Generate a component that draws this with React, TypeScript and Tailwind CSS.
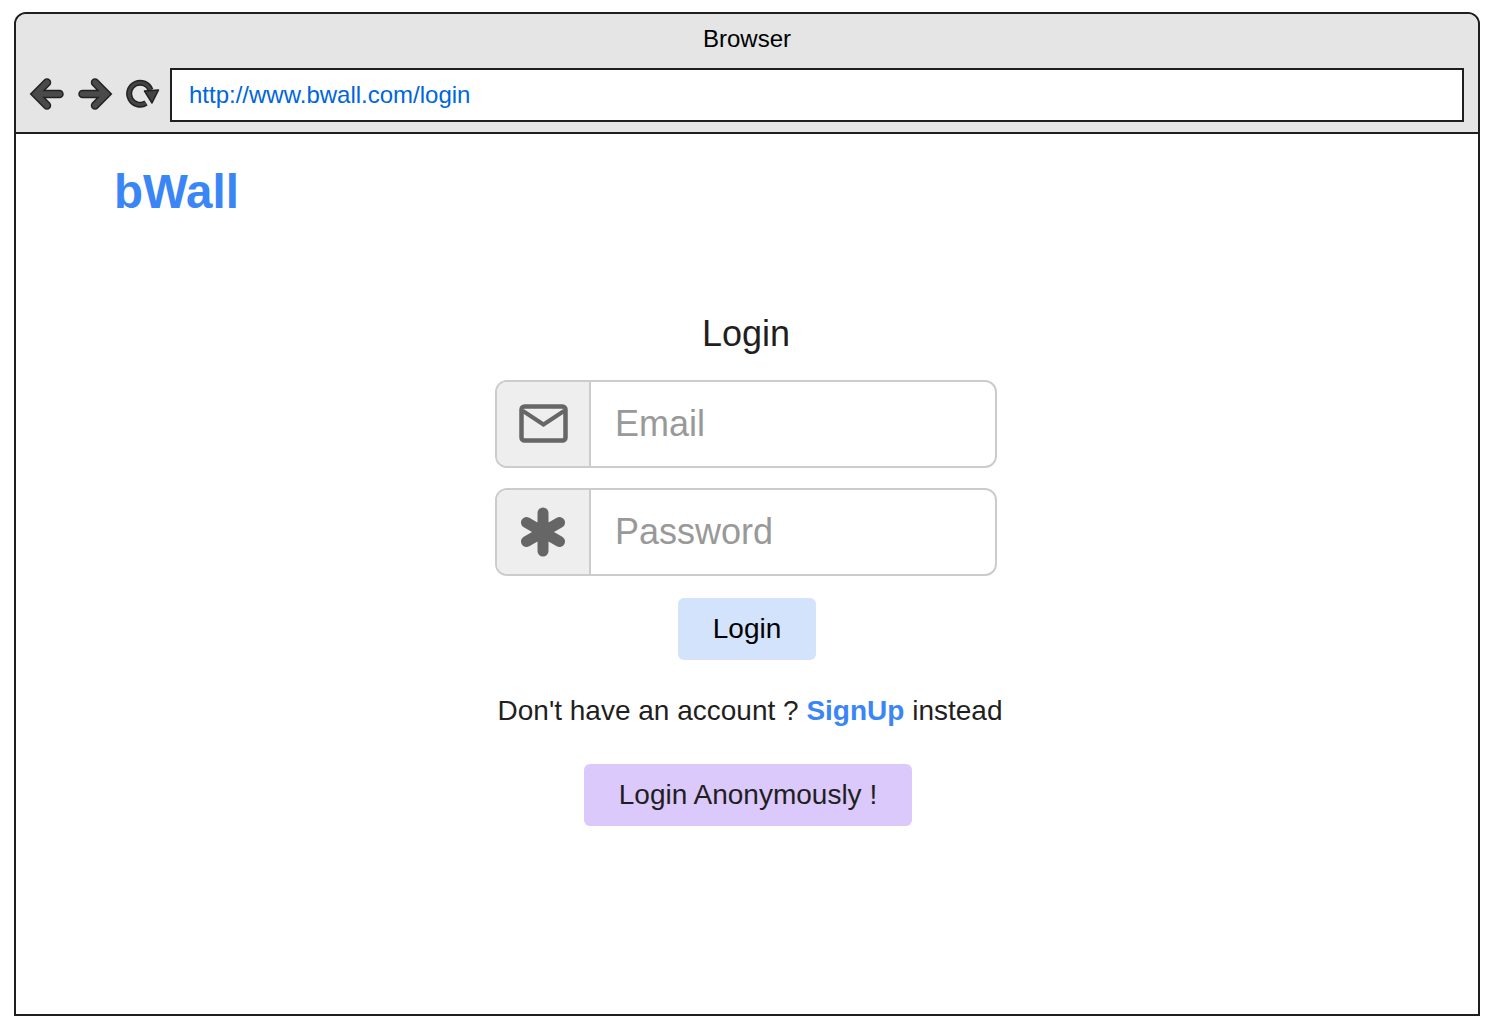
import React from "react";

function Arrow({ flip }: { flip?: boolean }) {
  const d = "M7.6 18 H31.5 M19 6.5 L7.6 18 L19 29.5";
  return (
    <svg width="38" height="38" viewBox="0 0 38 38" fill="none" className={flip ? "shrink-0 -scale-x-100" : "shrink-0"}>
      <path d={d} stroke="#222222" strokeWidth="8.5" strokeLinecap="round" strokeLinejoin="miter" />
      <path d={d} stroke="#4a4a4a" strokeWidth="5.5" strokeLinecap="round" strokeLinejoin="miter" />
    </svg>
  );
}

function Refresh() {
  const d = "M22 27 A11 11 0 1 1 26.5 14";
  return (
    <svg width="38" height="38" viewBox="0 0 38 38" fill="none" className="shrink-0">
      <path d={d} stroke="#222222" strokeWidth="6" strokeLinecap="butt" />
      <path d={d} stroke="#444444" strokeWidth="3" strokeLinecap="butt" />
      <path d="M20.5 15 L34.5 14 L28 27 Z" fill="#444444" stroke="#222222" strokeWidth="1.5" strokeLinejoin="round" />
    </svg>
  );
}

function Mail() {
  return (
    <svg width="49" height="40" viewBox="0 0 49 40" fill="none">
      <rect x="2.5" y="2.5" width="44" height="34" rx="3" stroke="#666666" strokeWidth="4.5" />
      <path d="M4 7 L24.5 20.5 L45 7" stroke="#666666" strokeWidth="4" />
    </svg>
  );
}

function Star() {
  return (
    <svg width="48" height="50" viewBox="0 0 48 50" fill="none" stroke="#666666" strokeWidth="11" strokeLinecap="round">
      <path d="M24 6 V44 M7.5 15.5 L40.5 34.5 M40.5 15.5 L7.5 34.5" />
    </svg>
  );
}

function Field({ icon, placeholder, className }: { icon: React.ReactNode; placeholder: string; className?: string }) {
  return (
    <div className={"flex h-[88px] w-[502px] overflow-hidden rounded-[12px] border-2 border-[#cccccc] bg-white " + (className ?? "")}>
      <div className="flex w-[94px] shrink-0 items-center justify-center border-r-2 border-[#cccccc] bg-[#eeeeee]">{icon}</div>
      <div className="flex-1 pl-[24px] text-[36px] leading-[84px] text-[#999999]">{placeholder}</div>
    </div>
  );
}

export default function App() {
  return (
    <div className="bg-white pl-[14px] pt-[12px] font-['Liberation_Sans',Arial,sans-serif]">
      <div className="flex h-[1004px] w-[1466px] flex-col overflow-hidden rounded-tl-[12px] rounded-tr-[12px] border-2 border-[#1f1f1f]">
        <header className="h-[120px] shrink-0 border-b-2 border-[#1f1f1f] bg-[#e5e5e5]">
          <div className="h-[50px] text-center text-[24px] leading-[50px] text-black">Browser</div>
          <div className="mt-[4px] flex items-center pl-[12px] pr-[14px]">
            <Arrow />
            <div className="ml-[10px]"><Arrow flip /></div>
            <div className="ml-[10px]"><Refresh /></div>
            <div className="ml-[8px] h-[54px] flex-1 border-2 border-[#1f1f1f] bg-white pl-[17px] text-[24px] leading-[50px] text-[#0066dd]">
              http://www.bwall.com/login
            </div>
          </div>
        </header>
        <main className="flex-1 bg-white">
          <div className="pl-[98px] pt-[33px] text-[47.5px] font-bold leading-[50px] text-[#3b86f6]">bWall</div>
          <div className="flex flex-col items-center">
            <h1 className="mb-0 mr-[2px] mt-[97px] text-[36px] font-normal leading-[40px] text-[#1f1f1f]">Login</h1>
            <div className="mr-[2px] flex flex-col">
              <Field className="mt-[26px]" icon={<Mail />} placeholder="Email" />
              <Field className="mt-[20px]" icon={<Star />} placeholder="Password" />
            </div>
            <button className="mt-[22px] h-[62px] w-[138px] rounded-[6px] bg-[#d3e3fc] text-[28px] text-black">Login</button>
            <p className="ml-[6px] mt-[35px] text-[28px] leading-[32px] text-[#1f1f1f]">
              Don't have an account ? <span className="font-bold text-[#3b86f6]">SignUp</span> instead
            </p>
            <button className="ml-[2px] mt-[37px] h-[62px] w-[328px] rounded-[6px] bg-[#dbc9fb] text-[28px] text-[#1f1f1f]">Login Anonymously !</button>
          </div>
        </main>
      </div>
    </div>
  );
}
